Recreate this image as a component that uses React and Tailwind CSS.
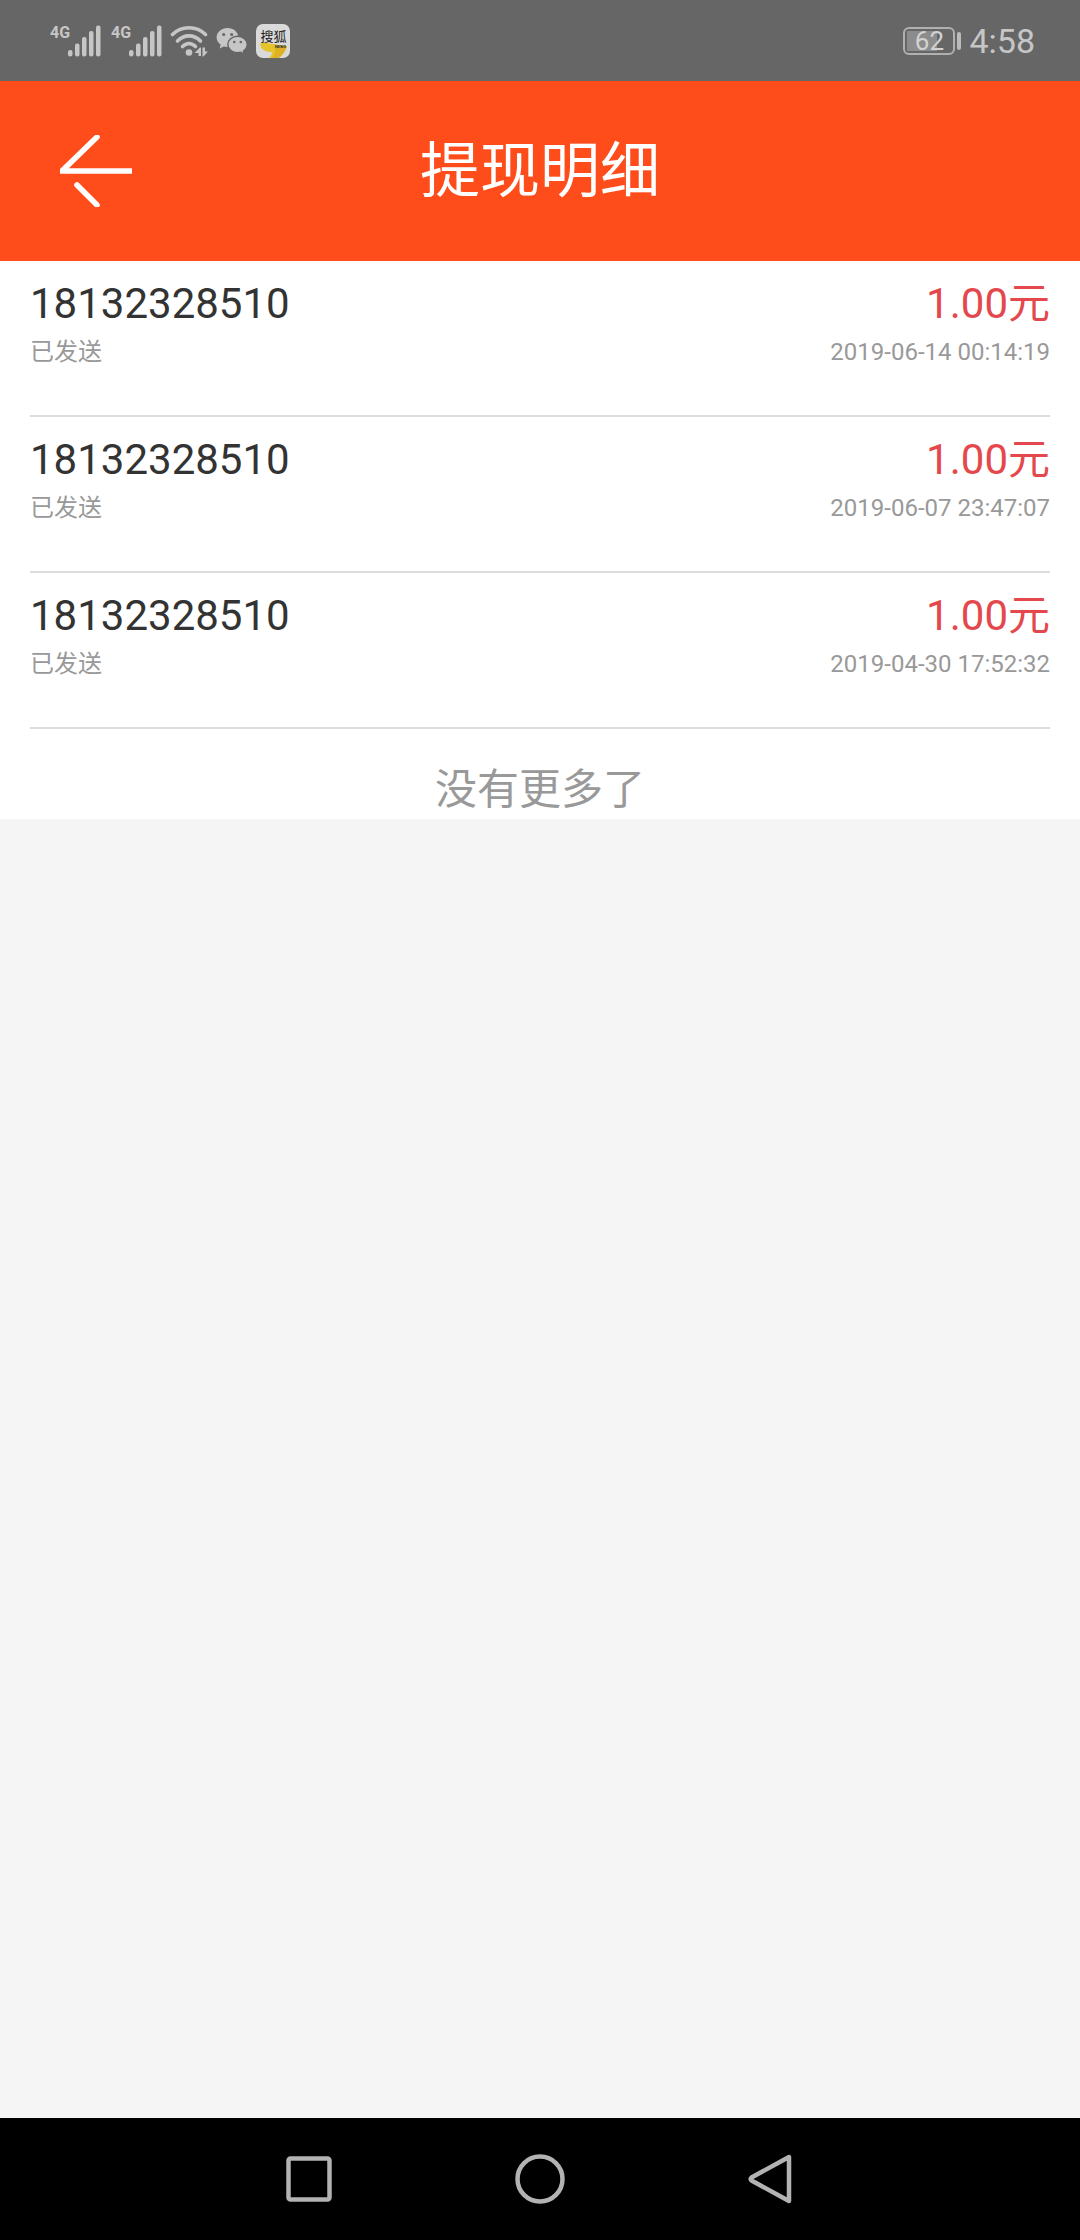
const records = [
  { phone: '18132328510', status: '已发送', amount: '1.00元', time: '2019-06-14 00:14:19' },
  { phone: '18132328510', status: '已发送', amount: '1.00元', time: '2019-06-07 23:47:07' },
  { phone: '18132328510', status: '已发送', amount: '1.00元', time: '2019-04-30 17:52:32' },
];

function Signal() {
  return (
    <div className="flex h-8 items-start">
      <span className="w-[18px] text-base leading-4 font-bold">4G</span>
      <svg className="h-8 w-[33px]" viewBox="0 0 33 32" fill="currentColor" aria-hidden="true">
        <rect x="0" y="25" width="4.5" height="6.5" rx="2.2" />
        <rect x="7" y="18.500" width="4.500" height="13" rx="2" />
        <rect x="14" y="12" width="4.500" height="19.500" rx="2" />
        <rect x="21" y="6" width="4.500" height="25.500" rx="2" />
        <rect x="28" y="0.500" width="4.500" height="31" rx="2" />
      </svg>
    </div>
  );
}

function Wifi() {
  return (
    <svg className="h-8 w-[38px]" viewBox="0 0 38 32" fill="none" stroke="currentColor" strokeWidth="3.600" strokeLinecap="round" aria-hidden="true">
      <path d="M2.500 9.500C11.500 .5 26.500 .5 35.500 9.500" />
      <path d="M7.500 16C14 9.200 24 9.200 30.500 16" />
      <path d="M12.500 21.500C16.500 17.500 21.500 17.500 25.500 21.500" />
      <circle cx="19" cy="27.500" r="3.300" fill="currentColor" stroke="none" />
      <path d="M24.500 28L30 22.500H31V31H28.500V28ZM32.500 22.500H35V26.500H38L33.500 31.500H32.500Z" fill="currentColor" stroke="none" />
    </svg>
  );
}

function WeChat() {
  return (
    <svg className="h-8 w-8" viewBox="0 1 32 32" aria-hidden="true">
      <path fill="currentColor" d="M11.5 4C5.4 4 .6 8.300 .6 13.500c0 2.900 1.600 5.400 4.100 7L3.700 24.600l4-2c1.200.3 2.500.5 3.800.5 6 0 10.900-4.300 10.900-9.600S17.500 4 11.500 4Z" />
      <path fill="currentColor" stroke="#666666" strokeWidth="1.500" d="M21.500 12.300c-5.400 0-9.700 3.700-9.700 8.200s4.300 8.200 9.700 8.200c1.100 0 2.200-.2 3.200-.5l3.800 2-1-3.200c2.300-1.500 3.700-3.800 3.700-6.500 0-4.500-4.300-8.200-9.700-8.200Z" />
      <g fill="#666666">
        <circle cx="7.700" cy="10.500" r="1.500" />
        <circle cx="15.700" cy="10.500" r="1.500" />
        <circle cx="18.300" cy="18" r="1.300" />
        <circle cx="24.800" cy="18" r="1.300" />
      </g>
    </svg>
  );
}

function SohuNews() {
  return (
    <svg className="h-[34px] w-[34px]" viewBox="0 0 34 34" aria-hidden="true">
      <rect width="34" height="34" rx="7" fill="#dadada" />
      <path d="M4.500 19C8 17 12 20 17 20C21 20 24 22 31 22C29 28 26 31 23 34H13C16 31 17 29 15 28C10 28 3 25 4.500 19Z" fill="#e3c42a" />
      <path d="M18 21C23 24 27 22 31 22C29 28 26 31 23 34H16C20 30 20 26 18 21Z" fill="#dfb023" />
      <text x="17.500" y="17" textAnchor="middle" fontSize="13" fontFamily="Noto Sans CJK SC, sans-serif" fontWeight="400" fill="#222222">搜狐</text>
      <text x="24.500" y="24" textAnchor="middle" fontSize="4" fontFamily="Roboto, sans-serif" fontWeight="700" fill="#333333">NEWS</text>
    </svg>
  );
}

function Battery() {
  return (
    <div className="flex items-center gap-0.5">
      <div className="relative flex h-7 w-[52px] items-center justify-center rounded-md border-2 border-[#b0b0b0]">
        <div className="absolute inset-y-0.5 left-0.5 w-[30px] bg-[#8c8c8c]" />
        <span className="relative text-[26px] leading-6 text-[#d2d2d2]">62</span>
      </div>
      <div className="h-[18px] w-1 rounded-sm bg-[#bbbbbb]" />
    </div>
  );
}

function StatusBar() {
  return (
    <div className="flex h-[81px] items-center justify-between bg-[#666666] pr-[45px] pl-[50px] text-[#c6c6c6]">
      <div className="flex items-center gap-2">
        <div className="flex gap-2.5">
          <Signal />
          <Signal />
        </div>
        <Wifi />
        <WeChat />
        <SohuNews />
      </div>
      <div className="flex items-center gap-2">
        <Battery />
        <span className="text-[34px] leading-10">4:58</span>
      </div>
    </div>
  );
}

function Header() {
  return (
    <header className="grid h-[180px] grid-cols-[72px_1fr_72px] items-center bg-[#ff4c1b] px-[60px] text-white">
      <button type="button" aria-label="返回" className="h-[72px] w-[72px]">
        <svg className="h-full w-full" viewBox="0 0 72 72" fill="none" stroke="currentColor" strokeWidth="5.500" strokeLinecap="round" aria-hidden="true">
          <path d="M37 2L2 36H74" />
          <path d="M17 50L37 70" />
        </svg>
      </button>
      <h1 className="pt-0.5 text-center text-6xl leading-[72px] font-normal">提现明细</h1>
    </header>
  );
}

function NavBar() {
  return (
    <nav className="flex h-[122px] items-center justify-center gap-[181px] bg-black text-[#b3b3b3]">
      <button type="button" aria-label="最近任务" className="h-[50px] w-[50px]">
        <svg className="h-full w-full" viewBox="0 0 50 50" fill="none" stroke="currentColor" strokeWidth="4.500" aria-hidden="true">
          <rect x="4.500" y="4.500" width="41" height="41" rx="2" />
        </svg>
      </button>
      <button type="button" aria-label="主屏幕" className="h-[50px] w-[50px]">
        <svg className="h-full w-full" viewBox="0 0 50 50" fill="none" stroke="currentColor" strokeWidth="4.500" aria-hidden="true">
          <circle cx="25" cy="25" r="22.500" />
        </svg>
      </button>
      <button type="button" aria-label="返回上一页" className="h-[50px] w-[50px]">
        <svg className="h-full w-full" viewBox="0 0 50 50" fill="none" stroke="currentColor" strokeWidth="4.500" strokeLinejoin="round" aria-hidden="true">
          <path d="M43 3V47L5.500 26.500Q4 25 5.500 23.500Z" />
        </svg>
      </button>
    </nav>
  );
}

export default function App() {
  return (
    <div className="flex min-h-screen flex-col bg-[#f5f5f5] font-['Roboto','Noto_Sans_CJK_SC',sans-serif]" lang="zh-CN">
      <StatusBar />
      <Header />
      <main className="flex-1">
        <div className="bg-white">
          <ul className="px-[30px]">
            {records.map((r) => (
              <li key={r.time} className="flex h-[156px] justify-between border-b-2 border-[#dddddd] pt-[13px]">
                <div>
                  <p className="text-[42px] leading-[60px] text-[#333333]">{r.phone}</p>
                  <p className="text-2xl leading-9 text-[#999999]">{r.status}</p>
                </div>
                <div className="text-right">
                  <p className="text-[42px] leading-[60px] text-[#e4484c]">{r.amount}</p>
                  <p className="text-2xl leading-9 text-[#999999]">{r.time}</p>
                </div>
              </li>
            ))}
          </ul>
          <p className="pt-8 text-center text-[42px] leading-[58px] text-[#999999]">没有更多了</p>
        </div>
      </main>
      <NavBar />
    </div>
  );
}
